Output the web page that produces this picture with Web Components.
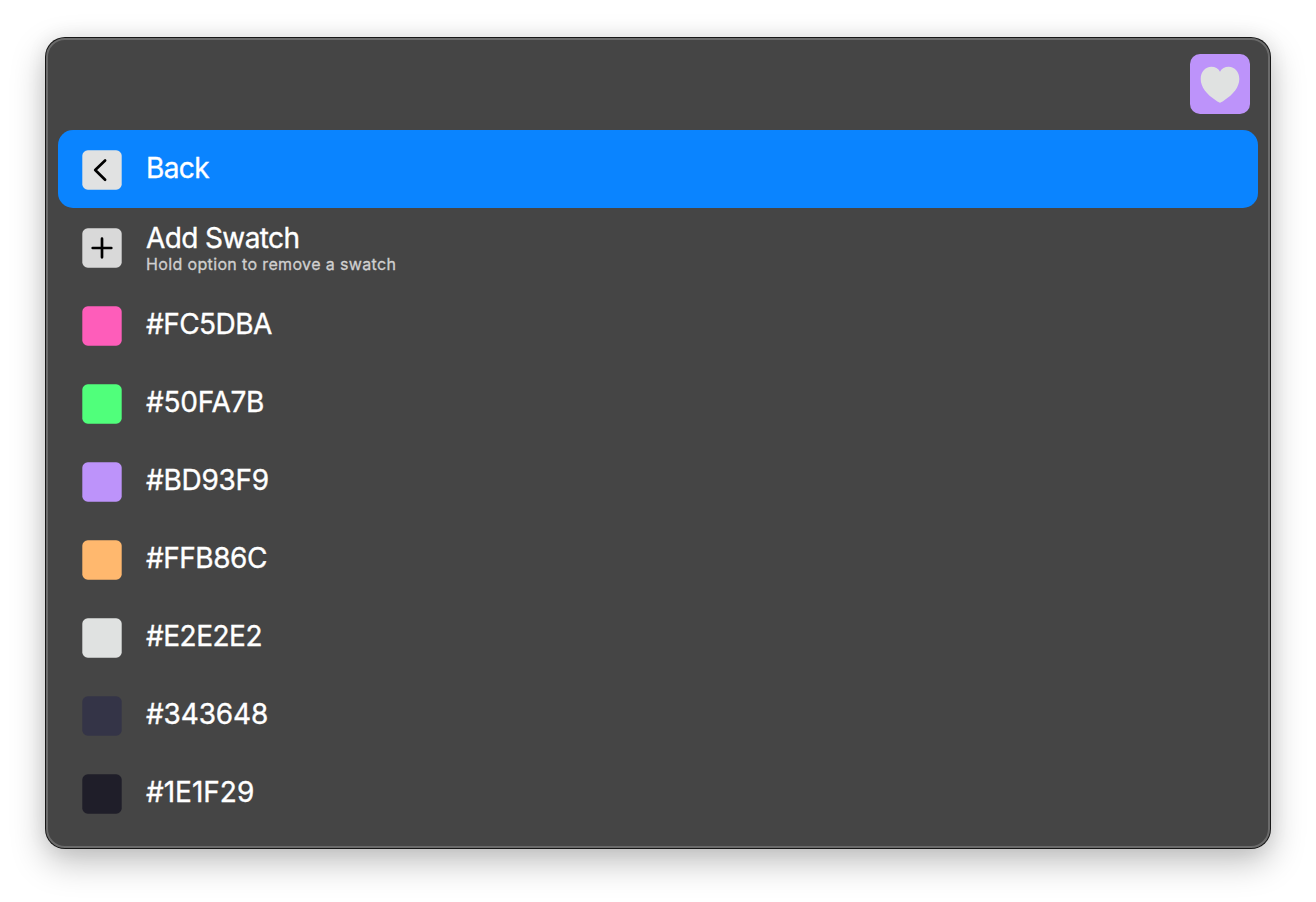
<!DOCTYPE html>
<html lang="en">
<head>
<meta charset="utf-8">
<title>Swatches</title>
<style>
  html, body { margin: 0; height: 100%; overflow: hidden; background: #fff; }
  body { font-family: Inter, "Liberation Sans", sans-serif; }
</style>
</head>
<body>
<swatch-panel>
  <heart-badge slot="header"></heart-badge>
  <menu-row selected style="--track:-.6px"><icon-tile slot="icon" kind="back"></icon-tile>Back</menu-row>
  <menu-row style="--track:-.62px;--lift:-2px"><icon-tile slot="icon" kind="add"></icon-tile>Add Swatch<span slot="note">Hold option to remove a swatch</span></menu-row>
  <menu-row style="--track:-.55px"><icon-tile slot="icon" style="--fill:#fe5dba"></icon-tile>#FC5DBA</menu-row>
  <menu-row style="--track:-.25px"><icon-tile slot="icon" style="--fill:#50ff7b"></icon-tile>#50FA7B</menu-row>
  <menu-row style="--track:-.28px"><icon-tile slot="icon" style="--fill:#bd93fa"></icon-tile>#BD93F9</menu-row>
  <menu-row style="--track:-.48px"><icon-tile slot="icon" style="--fill:#ffb86e"></icon-tile>#FFB86C</menu-row>
  <menu-row style="--track:-.5px"><icon-tile slot="icon" style="--fill:#e0e2e1"></icon-tile>#E2E2E2</menu-row>
  <menu-row style="--track:-.16px"><icon-tile slot="icon" style="--fill:#343447"></icon-tile>#343648</menu-row>
  <menu-row><icon-tile slot="icon" style="--fill:#1f1e29"></icon-tile>#1E1F29</menu-row>
</swatch-panel>
<script>
class Base extends HTMLElement {
  connectedCallback() {
    if (!this.shadowRoot) this.attachShadow({ mode: 'open' }).innerHTML = this.render();
  }
}

customElements.define('swatch-panel', class extends Base {
  render() {
    return `<style>
      :host { display: block; box-sizing: border-box; width: 1226px; height: 812px; margin: 37px 0 0 45px;
        padding: 1px; border-radius: 20px; background: #171717;
        box-shadow: 0 13px 34px rgba(0,0,0,.25), 0 0 20px rgba(0,0,0,.07); }
      .body { box-sizing: border-box; height: 100%; border: 2px solid #6b6b6b; border-radius: 19px;
        background: #454545; padding: 0 10px; }
      header { display: flex; justify-content: flex-end; box-sizing: border-box; height: 90px; padding: 14px 8px 0 0; }
    </style>
    <div class="body"><header><slot name="header"></slot></header><main><slot></slot></main></div>`;
  }
});

customElements.define('menu-row', class extends Base {
  render() {
    return `<style>
      :host { display: flex; align-items: center; box-sizing: border-box; height: 78px; padding: 0 24px; gap: 24px;
        border-radius: 15px; color: #fff; }
      :host([selected]) { background: #0a84ff; }
      .icon { display: flex; padding-top: 2px; }
      .text { display: flex; flex-direction: column; padding-bottom: calc(2px + var(--lift, 0px)); padding-top: calc(0px - var(--lift, 0px)); }
      .title { font-size: 28px; line-height: 32px; letter-spacing: var(--track, 0px); white-space: nowrap;
        -webkit-text-stroke: .35px #fff; }
      ::slotted([slot=note]) { display: block; font-size: 16px; line-height: 20px; letter-spacing: .36px; color: #d0d0d0;
        white-space: nowrap; -webkit-text-stroke: .3px #d0d0d0; }
    </style>
    <div class="icon"><slot name="icon"></slot></div>
    <div class="text"><div class="title"><slot></slot></div><slot name="note"></slot></div>`;
  }
});

const GLYPHS = {
  back: '<path d="M23.100 10.500 13.200 20l9.900 9.700"/>',
  add: '<path d="M20 10.700v18.600M10.700 20h18.600"/>'
};
customElements.define('icon-tile', class extends Base {
  render() {
    const kind = this.getAttribute('kind');
    const fill = kind === 'back' ? '#e1e2e2' : '#d9d9d9';
    return `<style>
      :host { display: block; box-sizing: border-box; width: 40px; height: 40px; }
      svg { display: block; }
      rect { fill: var(--fill, ${fill}); }
      path { fill: none; stroke: #000; stroke-width: 2.7; stroke-linecap: round; stroke-linejoin: round; }
    </style>
    <svg width="40" height="40" viewBox="0 0 40 40"><rect x=".3" y=".3" width="39.4" height="39.4" rx="5.500"/>${GLYPHS[kind] || ''}</svg>`;
  }
});

customElements.define('heart-badge', class extends Base {
  render() {
    return `<style>
      :host { display: block; width: 60px; height: 60px; border-radius: 10px; background: #bd93fa; }
      svg { display: block; }
    </style>
    <svg width="60" height="60" viewBox="0 0 60 60"><path fill="#e0e2e1" d="M30 48.700C29.300 48.700 28 47.800 26 46.500 16.500 40.300 10.700 33 10.700 25 10.700 17.800 15.300 12.800 21.300 12.800 25.200 12.800 28.300 14.600 30 17.700 31.700 14.600 34.800 12.800 38.700 12.800 44.700 12.800 49.300 17.800 49.300 25 49.300 33 43.500 40.300 34 46.500 32 47.800 30.700 48.700 30 48.700Z"/></svg>`;
  }
});
</script>
</body>
</html>
